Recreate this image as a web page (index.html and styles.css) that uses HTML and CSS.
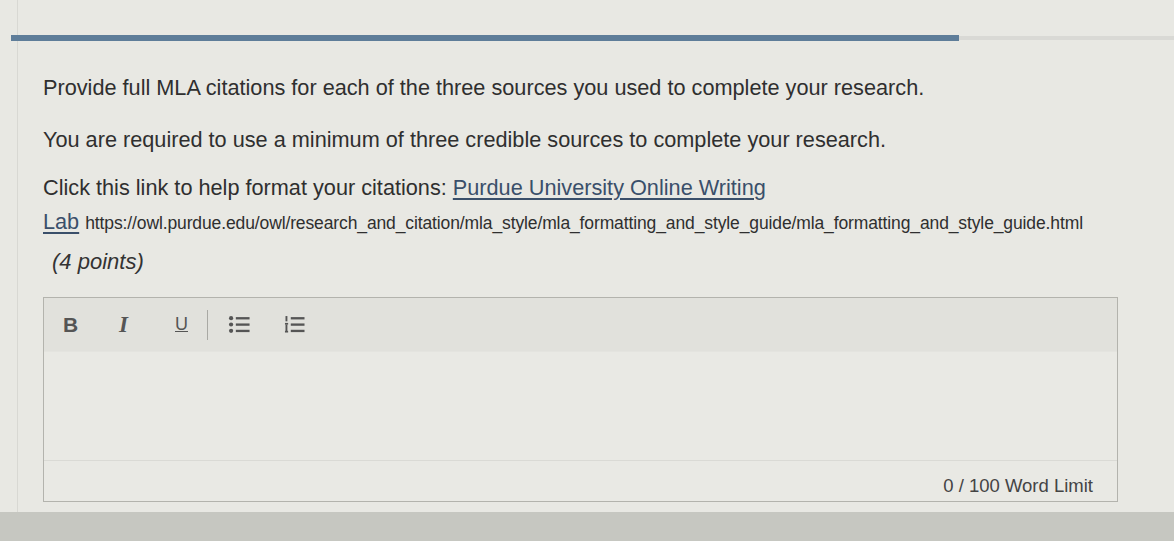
FILE: index.html
```html
<!DOCTYPE html>
<html>
<head>
<meta charset="utf-8">
<link rel="stylesheet" href="styles.css">
</head>
<body>
<div class="page">
  <div class="progress">
    <div class="progress-fill"></div>
    <div class="progress-rest"></div>
  </div>
  <div class="content">
    <p class="line">Provide full MLA citations for each of the three sources you used to complete your research.</p>
    <p class="line">You are required to use a minimum of three credible sources to complete your research.</p>
    <p class="line link-para">Click this link to help format your citations: <a class="link">Purdue University Online Writing<br>Lab</a> <span class="url">https://owl.purdue.edu/owl/research_and_citation/mla_style/mla_formatting_and_style_guide/mla_formatting_and_style_guide.html</span></p>
    <p class="points">(4 points)</p>
    <div class="editor">
      <div class="toolbar">
        <span class="tool bold">B</span>
        <span class="tool italic">I</span>
        <span class="tool under">U</span>
        <span class="sep"></span>
        <span class="tool icon">
          <svg width="22" height="19" viewBox="0 0 20 18"><circle cx="2.5" cy="3" r="2" fill="#555"/><circle cx="2.5" cy="9" r="2" fill="#555"/><circle cx="2.5" cy="15" r="2" fill="#555"/><rect x="7" y="2" width="13" height="2.2" fill="#555"/><rect x="7" y="8" width="13" height="2.2" fill="#555"/><rect x="7" y="14" width="13" height="2.2" fill="#555"/></svg>
        </span>
        <span class="tool icon">
          <svg width="22" height="19" viewBox="0 0 20 18"><rect x="1" y="1" width="1.8" height="5" fill="#555"/><rect x="0.5" y="7.5" width="3" height="1.6" fill="#555"/><rect x="1" y="9" width="1.8" height="7" fill="#555"/><rect x="0.5" y="15" width="3" height="1.6" fill="#555"/><rect x="6" y="2" width="13" height="2.2" fill="#555"/><rect x="6" y="8" width="13" height="2.2" fill="#555"/><rect x="6" y="14" width="13" height="2.2" fill="#555"/></svg>
        </span>
      </div>
      <div class="body"></div>
      <div class="footer">0 / 100 Word Limit</div>
    </div>
  </div>
  <div class="bottom-band"></div>
</div>
</body>
</html>
```
FILE: styles.css
```css
* { box-sizing: border-box; }
html, body { margin: 0; padding: 0; }
body {
  background: #e8e8e3;
  font-family: "Liberation Sans", Arial, sans-serif;
  color: #333;
  width: 1174px;
  height: 541px;
  overflow: hidden;
}
.page {
  display: flex;
  flex-direction: column;
  height: 541px;
  border-left: 1px solid #d8d8d3;
  margin-left: 17px;
  position: relative;
}
.progress {
  display: flex;
  align-items: center;
  margin-top: 35px;
  margin-left: -7px;
  height: 6px;
}
.progress-fill {
  width: 948px;
  height: 6px;
  background: #5e7d99;
}
.progress-rest {
  flex: 1;
  height: 4px;
  background: #d9d9d5;
}
.content {
  padding-left: 25px;
  padding-top: 35px;
  flex: 1;
}
.line {
  margin: 0 0 28px 0;
  font-size: 21.7px;
  line-height: 24px;
  color: #2f2f2f;
}
.link-para {
  margin-bottom: 0;
  line-height: 34px;
  margin-top: -9px;
}
.link {
  color: #3a4f6a;
  text-decoration: underline;
  text-underline-offset: 3px;
}
.url {
  font-size: 17.5px;
  letter-spacing: -0.12px;
  color: #2f2f2f;
}
.points {
  margin: 9px 0 0 9px;
  font-style: italic;
  font-size: 22px;
  line-height: 26px;
  color: #333;
}
.editor {
  margin-top: 22px;
  width: 1075px;
  height: 205px;
  border: 1px solid #b3b3ad;
  display: flex;
  flex-direction: column;
  background: #e9e9e4;
}
.toolbar {
  height: 54px;
  background: #e1e1dc;
  display: flex;
  align-items: center;
  padding-left: 17px;
  border-bottom: 1px solid #e4e4df;
}
.tool {
  width: 56px;
  text-align: left;
  color: #555;
  font-size: 19px;
  padding-left: 2px;
}
.bold { font-weight: bold; font-family: "Liberation Sans", sans-serif; font-size: 21px; }
.italic { font-style: italic; font-family: "Liberation Serif", serif; font-weight: bold; font-size: 23px; }
.under { text-decoration: underline; font-size: 18px; width: 34px; }
.sep {
  width: 1px;
  height: 30px;
  background: #a9a9a4;
  margin-right: 20px;
}
.icon { display: flex; align-items: center; padding-left: 0; }
.body {
  flex: 1;
  border-bottom: 1px solid #dadad5;
}
.footer {
  height: 40px;
  display: flex;
  align-items: center;
  justify-content: flex-end;
  padding-right: 24px;
  padding-top: 10px;
  font-size: 18.5px;
  color: #444;
}
.bottom-band {
  position: absolute;
  left: -18px;
  right: 0;
  bottom: 0;
  height: 29px;
  background: #c6c7c1;
}
```
